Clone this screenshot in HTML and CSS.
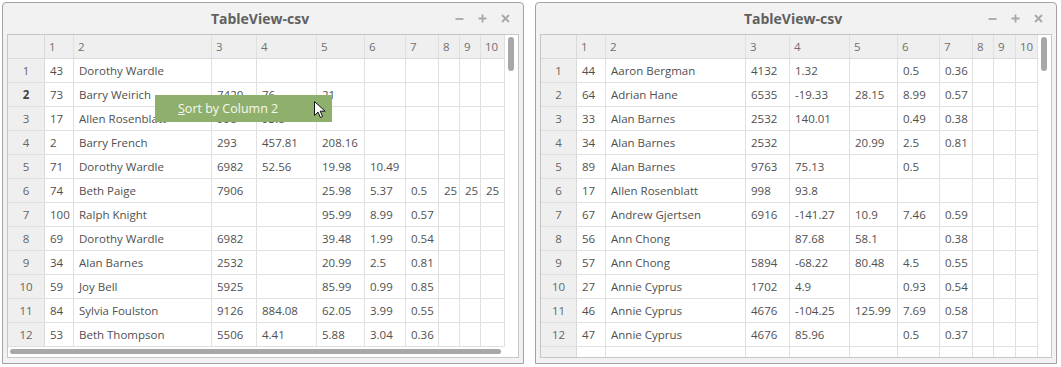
FILE: index.html
```html
<!DOCTYPE html>
<html lang="en">
<head>
    <meta charset="UTF-8">
    <title>TableView-csv</title>
    <link rel="stylesheet" href="styles.css">
</head>
<body>
    <div class="desktop">
        <!-- left window: original order, context menu open -->
        <div class="window">
            <div class="titlebar">
                <span></span>
                <div class="title">TableView-csv</div>
                <div class="win-buttons">
                    <span class="win-btn"><svg width="9" height="9" viewBox="0 0 9 9"><path d="M0.5 5h8" /></svg></span>
                    <span class="win-btn"><svg width="9" height="9" viewBox="0 0 9 9"><path d="M0.5 4.5h8M4.5 0.5v8" /></svg></span>
                    <span class="win-btn"><svg width="9" height="9" viewBox="0 0 9 9"><path d="M1 1l7 7M8 1l-7 7" /></svg></span>
                </div>
            </div>
            <div class="body">
                <div class="frame">
                    <div class="sheet left-cols">
                        <div class="row head"><div></div><div>1</div><div>2</div><div>3</div><div>4</div><div>5</div><div>6</div><div>7</div><div>8</div><div>9</div><div>10</div></div>
                        <div class="row"><div>1</div><div>43</div><div>Dorothy Wardle</div><div></div><div></div><div></div><div></div><div></div><div></div><div></div><div></div></div>
                        <div class="row current"><div>2</div><div>73</div><div>Barry Weirich</div><div>7420</div><div>76</div><div>21</div><div></div><div></div><div></div><div></div><div></div></div>
                        <div class="row"><div>3</div><div>17</div><div>Allen Rosenblatt</div><div>998</div><div>93.8</div><div></div><div></div><div></div><div></div><div></div><div></div></div>
                        <div class="row"><div>4</div><div>2</div><div>Barry French</div><div>293</div><div>457.81</div><div>208.16</div><div></div><div></div><div></div><div></div><div></div></div>
                        <div class="row"><div>5</div><div>71</div><div>Dorothy Wardle</div><div>6982</div><div>52.56</div><div>19.98</div><div>10.49</div><div></div><div></div><div></div><div></div></div>
                        <div class="row"><div>6</div><div>74</div><div>Beth Paige</div><div>7906</div><div></div><div>25.98</div><div>5.37</div><div>0.5</div><div>25</div><div>25</div><div>25</div></div>
                        <div class="row"><div>7</div><div>100</div><div>Ralph Knight</div><div></div><div></div><div>95.99</div><div>8.99</div><div>0.57</div><div></div><div></div><div></div></div>
                        <div class="row"><div>8</div><div>69</div><div>Dorothy Wardle</div><div>6982</div><div></div><div>39.48</div><div>1.99</div><div>0.54</div><div></div><div></div><div></div></div>
                        <div class="row"><div>9</div><div>34</div><div>Alan Barnes</div><div>2532</div><div></div><div>20.99</div><div>2.5</div><div>0.81</div><div></div><div></div><div></div></div>
                        <div class="row"><div>10</div><div>59</div><div>Joy Bell</div><div>5925</div><div></div><div>85.99</div><div>0.99</div><div>0.85</div><div></div><div></div><div></div></div>
                        <div class="row"><div>11</div><div>84</div><div>Sylvia Foulston</div><div>9126</div><div>884.08</div><div>62.05</div><div>3.99</div><div>0.55</div><div></div><div></div><div></div></div>
                        <div class="row"><div>12</div><div>53</div><div>Beth Thompson</div><div>5506</div><div>4.41</div><div>5.88</div><div>3.04</div><div>0.36</div><div></div><div></div><div></div></div>
                        <div class="hscroll"><div class="hthumb"></div></div>
                    </div>
                    <div class="vscroll"><div class="vthumb"></div></div>
                </div>
            </div>
            <div class="context-menu"><span class="mnemonic">S</span>ort by Column 2</div>
            <svg class="cursor" width="13" height="19" viewBox="0 0 13 19">
                <path d="M1.5 1.5v14l3.5-3.4 2.4 5.4 2.2-1-2.4-5.3h4.9z" />
            </svg>
        </div>

        <!-- right window: sorted by column 2 -->
        <div class="window">
            <div class="titlebar">
                <span></span>
                <div class="title">TableView-csv</div>
                <div class="win-buttons">
                    <span class="win-btn"><svg width="9" height="9" viewBox="0 0 9 9"><path d="M0.5 5h8" /></svg></span>
                    <span class="win-btn"><svg width="9" height="9" viewBox="0 0 9 9"><path d="M0.5 4.5h8M4.5 0.5v8" /></svg></span>
                    <span class="win-btn"><svg width="9" height="9" viewBox="0 0 9 9"><path d="M1 1l7 7M8 1l-7 7" /></svg></span>
                </div>
            </div>
            <div class="body">
                <div class="frame">
                    <div class="sheet right-cols">
                        <div class="row head"><div></div><div>1</div><div>2</div><div>3</div><div>4</div><div>5</div><div>6</div><div>7</div><div>8</div><div>9</div><div>10</div></div>
                        <div class="row"><div>1</div><div>44</div><div>Aaron Bergman</div><div>4132</div><div>1.32</div><div></div><div>0.5</div><div>0.36</div><div></div><div></div><div></div></div>
                        <div class="row"><div>2</div><div>64</div><div>Adrian Hane</div><div>6535</div><div>-19.33</div><div>28.15</div><div>8.99</div><div>0.57</div><div></div><div></div><div></div></div>
                        <div class="row"><div>3</div><div>33</div><div>Alan Barnes</div><div>2532</div><div>140.01</div><div></div><div>0.49</div><div>0.38</div><div></div><div></div><div></div></div>
                        <div class="row"><div>4</div><div>34</div><div>Alan Barnes</div><div>2532</div><div></div><div>20.99</div><div>2.5</div><div>0.81</div><div></div><div></div><div></div></div>
                        <div class="row"><div>5</div><div>89</div><div>Alan Barnes</div><div>9763</div><div>75.13</div><div></div><div>0.5</div><div></div><div></div><div></div><div></div></div>
                        <div class="row"><div>6</div><div>17</div><div>Allen Rosenblatt</div><div>998</div><div>93.8</div><div></div><div></div><div></div><div></div><div></div><div></div></div>
                        <div class="row"><div>7</div><div>67</div><div>Andrew Gjertsen</div><div>6916</div><div>-141.27</div><div>10.9</div><div>7.46</div><div>0.59</div><div></div><div></div><div></div></div>
                        <div class="row"><div>8</div><div>56</div><div>Ann Chong</div><div></div><div>87.68</div><div>58.1</div><div></div><div>0.38</div><div></div><div></div><div></div></div>
                        <div class="row"><div>9</div><div>57</div><div>Ann Chong</div><div>5894</div><div>-68.22</div><div>80.48</div><div>4.5</div><div>0.55</div><div></div><div></div><div></div></div>
                        <div class="row"><div>10</div><div>27</div><div>Annie Cyprus</div><div>1702</div><div>4.9</div><div></div><div>0.93</div><div>0.54</div><div></div><div></div><div></div></div>
                        <div class="row"><div>11</div><div>46</div><div>Annie Cyprus</div><div>4676</div><div>-104.25</div><div>125.99</div><div>7.69</div><div>0.58</div><div></div><div></div><div></div></div>
                        <div class="row"><div>12</div><div>47</div><div>Annie Cyprus</div><div>4676</div><div>85.96</div><div></div><div>0.5</div><div>0.37</div><div></div><div></div><div></div></div>
                        <div class="row"><div></div><div></div><div></div><div></div><div></div><div></div><div></div><div></div><div></div><div></div><div></div></div>
                    </div>
                    <div class="vscroll"><div class="vthumb"></div></div>
                </div>
            </div>
        </div>
    </div>
</body>
</html>
```

FILE: styles.css
```css
* {
    margin: 0;
    padding: 0;
    box-sizing: border-box;
}

body {
    font-family: 'Open Sans', 'Noto Sans', sans-serif;
    background: #ffffff;
    color: #505050;
}

.desktop {
    display: flex;
    gap: 11px;
    padding: 2px 0 0 2px;
}

.window {
    position: relative;
    width: 522px;
    height: 362px;
    background: #f2f2f2;
    border: 1px solid #a2a2a2;
    border-radius: 4px 4px 0 0;
    display: flex;
    flex-direction: column;
}

.titlebar {
    height: 31px;
    display: grid;
    grid-template-columns: 1fr auto 1fr;
    align-items: center;
    padding-right: 6px;
}

.title {
    font-size: 14px;
    font-weight: 700;
    color: #606060;
    padding-bottom: 1px;
}

.win-buttons {
    display: flex;
    justify-content: flex-end;
}

.win-btn {
    width: 23px;
    height: 31px;
    display: flex;
    align-items: center;
    justify-content: center;
}

.win-btn svg {
    stroke: #a8a8a8;
    stroke-width: 1.8;
    fill: none;
}

.body {
    padding: 0 4px 4px 4px;
}

.frame {
    height: 324px;
    border: 1px solid #c6c6c6;
    background: #ffffff;
    display: flex;
}

.sheet {
    width: 497px;
    height: 322px;
    overflow: hidden;
    display: flex;
    flex-direction: column;
}

.row {
    display: grid;
    height: 24px;
    flex-shrink: 0;
}

.left-cols .row {
    grid-template-columns: 37px 29px 138px 45px 60px 48px 41px 33px 21px 21px 24px;
}

.right-cols .row {
    grid-template-columns: 36px 29px 140px 44px 60px 48px 42px 33px 21px 22px 22px;
}

.row > div {
    border-right: 1px solid #e0e0e0;
    border-bottom: 1px solid #e0e0e0;
    padding-left: 5px;
    font-size: 11.5px;
    line-height: 23px;
    white-space: nowrap;
    overflow: hidden;
}

.row > div:first-child {
    background: #efefef;
    color: #666666;
    text-align: center;
    padding-left: 0;
    border-right-color: #d9d9d9;
}

.row.head > div {
    background: #efefef;
    color: #707070;
    padding-left: 4px;
    border-bottom-color: #d9d9d9;
}

.row.current > div:first-child {
    font-weight: 700;
    color: #444444;
}

.vscroll {
    width: 12px;
    padding: 2px 3px 0 3px;
}

.vthumb {
    width: 6px;
    height: 34px;
    border-radius: 3px;
    background: #a8a8a8;
}

.hscroll {
    height: 10px;
    padding: 2px 4px 0 2px;
}

.hthumb {
    height: 5px;
    border-radius: 3px;
    background: #a8a8a8;
}

.context-menu {
    position: absolute;
    left: 152px;
    top: 92px;
    width: 177px;
    height: 27px;
    padding-left: 23px;
    background: #8fb06c;
    color: #f6f8f2;
    font-size: 12.5px;
    line-height: 27px;
}

.mnemonic {
    text-decoration: underline;
}

.cursor {
    position: absolute;
    left: 310px;
    top: 97px;
}

.cursor path {
    fill: #ffffff;
    stroke: #111111;
    stroke-width: 1;
    stroke-linejoin: round;
}
```
